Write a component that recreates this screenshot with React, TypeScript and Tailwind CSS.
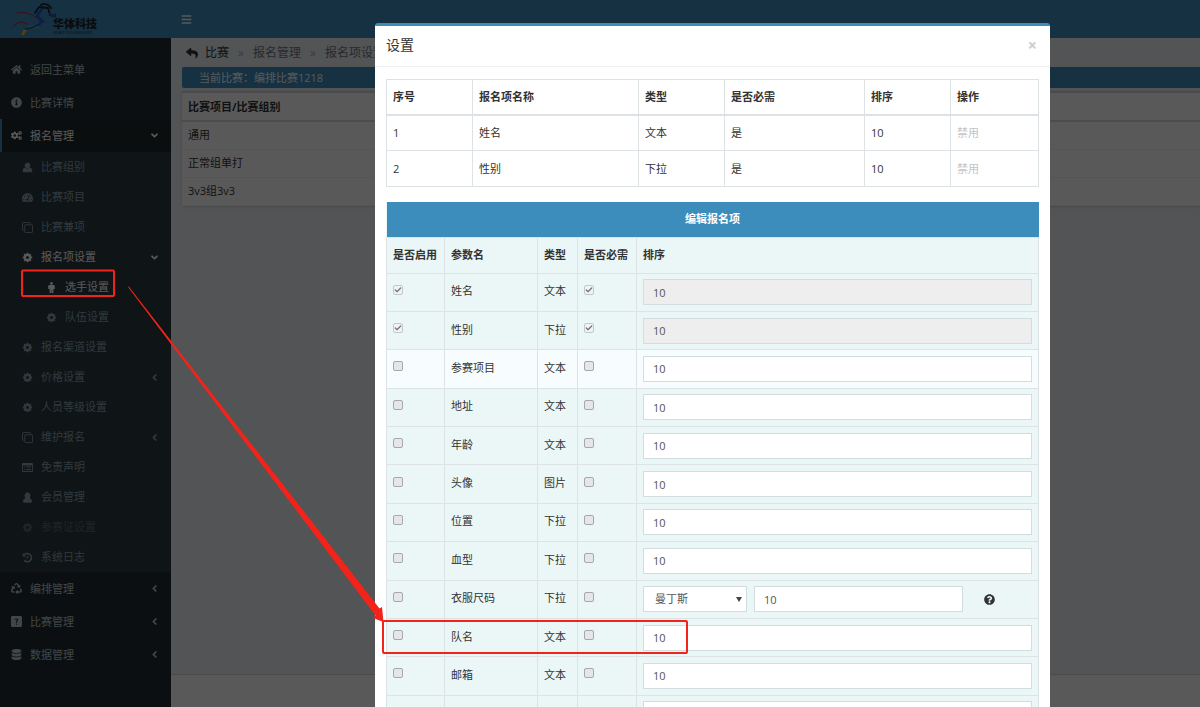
import type { ReactNode } from "react";
import type { IconType } from "react-icons";
import {
  FaAngleDown,
  FaAngleLeft,
  FaBars,
  FaCogs,
  FaDatabase,
  FaHome,
  FaInfoCircle,
  FaQuestionCircle,
  FaRecycle,
  FaReply,
  FaTachometerAlt,
} from "react-icons/fa";
import { Check } from "lucide-react";

type IconProps = { className?: string };

type MenuItem = {
  label: string;
  icon: IconType | ((props: IconProps) => ReactNode);
  arrow?: "left" | "down";
  tone?: "active" | "muted";
  nested?: boolean;
};

function CogIcon({ className }: IconProps) {
  return (
    <svg viewBox="-128 0 1792 1792" className={className} width="1em" height="1em" fill="currentColor">
      <path d="M1024 896q0-106-75-181t-181-75-181 75-75 181 75 181 181 75 181-75 75-181zm512-109v222q0 12-8 23t-20 13l-185 28q-19 54-39 91 35 50 107 138 10 12 10 25t-9 23q-27 37-99 108t-94 71q-12 0-26-9l-138-108q-44 23-91 38-16 136-29 186-7 28-36 28h-222q-14 0-24.500-8.500t-11.500-21.500l-28-184q-49-16-90-37l-141 107q-10 9-25 9-14 0-25-11-126-114-165-168-7-10-7-23 0-12 8-23 15-21 51-66.500t54-70.500q-27-50-41-99l-183-27q-13-2-21-12.500t-8-23.500v-222q0-12 8-23t19-13l186-28q14-46 39-92-40-57-107-138-10-12-10-24 0-10 9-23 26-36 98.500-107.500t94.500-71.500q13 0 26 10l138 107q44-23 91-38 16-136 29-186 7-28 36-28h222q14 0 24.500 8.500t11.500 21.500l28 184q49 16 90 37l142-107q9-9 24-9 13 0 25 10 129 119 165 170 7 8 7 22 0 12-8 23-15 21-51 66.500t-54 70.500q26 50 41 98l183 28q13 2 21 12.500t8 23.500z" />
    </svg>
  );
}

function UserIcon({ className }: IconProps) {
  return (
    <svg viewBox="0 0 16 16" className={className} width="1em" height="1em" fill="currentColor">
      <circle cx="8" cy="5" r="4" />
      <path d="M4.500 8C6.500 9.800 9.500 9.800 11.500 8 14 8.500 15 11 15 13c0 1.500-1 2-2 2H3c-1 0-2-.5-2-2 0-2 1-4.500 3.500-5z" />
    </svg>
  );
}

function MemberIcon({ className }: IconProps) {
  return (
    <svg viewBox="0 0 16 16" className={className} width="1em" height="1em" fill="currentColor">
      <path d="M5 1.500C6 .5 10 .5 11 1.500l.8 3 1.200.7-1 .8c0 1.200-.3 2.200-1 3 2.500.5 3.500 2.500 3.500 4.500 0 1.500-.8 2-2 2h-9c-1.200 0-2-.5-2-2 0-2 1-4 3.500-4.500-.7-.8-1-1.800-1-3l-1-.8 1.200-.7z" />
    </svg>
  );
}

function MaleIcon({ className }: IconProps) {
  return (
    <svg viewBox="0 0 16 16" className={className} width="1em" height="1em" fill="currentColor">
      <circle cx="8" cy="2" r="2" />
      <path d="M5 4.500h6c1 0 1.800.8 1.800 1.800V10h-2v6H8.300v-4h-.6v4H5.200v-6h-2V6.300c0-1 .8-1.800 1.800-1.800z" />
    </svg>
  );
}

function CloneIcon({ className }: IconProps) {
  return (
    <svg viewBox="0 0 16 16" className={className} width="1em" height="1em" fill="none" stroke="currentColor" strokeWidth="1.300">
      <rect x="4" y="4" width="11.300" height="11.300" rx="1" />
      <path d="M3 12H1.700a1 1 0 0 1-1-1V1.700a1 1 0 0 1 1-1H11a1 1 0 0 1 1 1V3" />
    </svg>
  );
}

function ListIcon({ className }: IconProps) {
  return (
    <svg viewBox="0 0 16 16" className={className} width="1em" height="1em" fill="currentColor">
      <path
        fillRule="evenodd"
        d="M1.500 1.500h13A1.500 1.500 0 0 1 16 3v10a1.500 1.500 0 0 1-1.500 1.500h-13A1.500 1.500 0 0 1 0 13V3a1.500 1.500 0 0 1 1.500-1.500zM1.300 5v8h13.400V5zM3 6.500h1.500V8H3zm3 0h7V8H6zM3 10h1.500v1.500H3zm3 0h7v1.500H6z"
      />
    </svg>
  );
}

function HistoryIcon({ className }: IconProps) {
  return (
    <svg viewBox="0 0 16 16" className={className} width="1em" height="1em" fill="none" stroke="currentColor">
      <path d="M3.500 3.800A6 6 0 1 1 3.200 12" strokeWidth="2.200" />
      <path d="M8.300 5v3.800H5.500" strokeWidth="1.300" />
      <path d="M1 1.500v5h5z" fill="currentColor" stroke="none" />
    </svg>
  );
}

function QuestionSquare({ className }: IconProps) {
  return (
    <svg viewBox="0 0 16 16" className={className} width="1em" height="1em">
      <path
        fill="currentColor"
        fillRule="evenodd"
        d="M2 0h12a2 2 0 0 1 2 2v12a2 2 0 0 1-2 2H2a2 2 0 0 1-2-2V2a2 2 0 0 1 2-2zm3.500 4v1.500h3.500L7.200 8v2h1.500V8.500L10.500 6V4zM7.200 11.300v1.500h1.500v-1.500z"
      />
    </svg>
  );
}

const topMenu: MenuItem[] = [
  { label: "返回主菜单", icon: FaHome },
  { label: "比赛详情", icon: FaInfoCircle },
  { label: "报名管理", icon: FaCogs, arrow: "down", tone: "active" },
];

const subMenu: MenuItem[] = [
  { label: "比赛组别", icon: UserIcon },
  { label: "比赛项目", icon: FaTachometerAlt },
  { label: "比赛兼项", icon: CloneIcon },
  { label: "报名项设置", icon: CogIcon, arrow: "down", tone: "active" },
  { label: "选手设置", icon: MaleIcon, tone: "active", nested: true },
  { label: "队伍设置", icon: CogIcon, nested: true },
  { label: "报名渠道设置", icon: CogIcon },
  { label: "价格设置", icon: CogIcon, arrow: "left" },
  { label: "人员等级设置", icon: CogIcon },
  { label: "维护报名", icon: CloneIcon, arrow: "left" },
  { label: "免责声明", icon: ListIcon },
  { label: "会员管理", icon: MemberIcon },
  { label: "参赛证设置", icon: CogIcon, tone: "muted" },
  { label: "系统日志", icon: HistoryIcon },
];

const bottomMenu: MenuItem[] = [
  { label: "编排管理", icon: FaRecycle, arrow: "left" },
  { label: "比赛管理", icon: QuestionSquare, arrow: "left" },
  { label: "数据管理", icon: FaDatabase, arrow: "left" },
];

const enabledFields = [
  { id: 1, name: "姓名", type: "文本" },
  { id: 2, name: "性别", type: "下拉" },
];

const fields = [
  { name: "姓名", type: "文本", locked: true },
  { name: "性别", type: "下拉", locked: true },
  { name: "参赛项目", type: "文本", hover: true },
  { name: "地址", type: "文本" },
  { name: "年龄", type: "文本" },
  { name: "头像", type: "图片" },
  { name: "位置", type: "下拉" },
  { name: "血型", type: "下拉" },
  { name: "衣服尺码", type: "下拉", sized: true },
  { name: "队名", type: "文本" },
  { name: "邮箱", type: "文本" },
  { name: "", type: "" },
];

function Arrow({ dir }: { dir?: "left" | "down" }) {
  if (!dir) return null;
  return dir === "down" ? <FaAngleDown className="ml-auto" /> : <FaAngleLeft className="ml-auto" />;
}

function MainLink({ item }: { item: MenuItem }) {
  const Icon = item.icon;
  const active = item.tone === "active";
  return (
    <li>
      <a
        href="#"
        className={`flex h-[33px] items-center border-l-2 pl-[9px] pr-[11px] ${
          active ? "border-[#3c8dbc] bg-[#1e282c] text-white" : "border-transparent text-[#b8c7ce]"
        }`}
      >
        <Icon className="mr-2 w-[11px]" />
        {item.label}
        <Arrow dir={item.arrow} />
      </a>
    </li>
  );
}

function SubLink({ item }: { item: MenuItem }) {
  const Icon = item.icon;
  const color =
    item.tone === "active" ? "text-white" : item.tone === "muted" ? "text-[#566a73]" : "text-[#8aa4af]";
  return (
    <li>
      <a href="#" className={`flex h-[30px] items-center pr-[11px] ${item.nested ? "pl-[46px]" : "pl-[22px]"} ${color}`}>
        <Icon className="mr-2 w-[11px]" />
        {item.label}
        <Arrow dir={item.arrow} />
      </a>
    </li>
  );
}

function Logo() {
  return (
    <a href="#" className="flex h-[38px] w-[171px] shrink-0 items-end pl-3">
      <svg viewBox="0 0 48 36" className="h-9 w-12" fill="none" strokeLinecap="round" strokeLinejoin="round">
        <path d="M5 11c8-2 14 1 20 5M1 25c4-5 9-6 14-3" stroke="#b0345c" strokeWidth="1.200" />
        <path d="M11 32c1-4 6-7 14-8" stroke="#e8b820" strokeWidth="3" />
        <path d="M14 27c6-1 10-3 14-5 3-3-1-6-3-8l5-7" stroke="#2456c8" strokeWidth="2.500" />
        <path d="M23 11l4-6 9 1 2 7 5 1" stroke="#1c2430" strokeWidth="1.800" />
        <path d="M29 3c3-2 7-1 10 3" stroke="#1c2430" strokeWidth="2" />
        <path d="M26 15l6 5M38 12l3 3 2-3" stroke="#2456c8" strokeWidth="2" />
      </svg>
      <span className="-ml-[7px] flex flex-col pb-[3px] text-[#222]">
        <span className="text-[11px] font-black leading-3">华体科技</span>
        <span className="text-[4px] leading-[5px]">HUATI TECHNOLOGY</span>
      </span>
    </a>
  );
}

function Tick({ label, checked, disabled }: { label: string; checked?: boolean; disabled?: boolean }) {
  return (
    <label className="relative mb-[5px] block size-[10px]">
      <input
        type="checkbox"
        aria-label={label}
        defaultChecked={checked}
        disabled={disabled}
        className="peer block size-[10px] appearance-none rounded-[2px] border border-[#a5a9a9] bg-[#e6e6e6] disabled:border-[#c3c8c8] disabled:bg-[#f0f3f3]"
      />
      <Check className="pointer-events-none absolute left-px top-px hidden size-2 stroke-[#777] stroke-[4] peer-checked:block" />
    </label>
  );
}

function SortInput({ label, disabled }: { label: string; disabled?: boolean }) {
  return (
    <input
      type="text"
      aria-label={label}
      defaultValue="10"
      disabled={disabled}
      className="block h-[26px] w-full border border-[#d2dde0] bg-white px-[9px] text-[11px] text-[#555] disabled:bg-[#eee]"
    />
  );
}

function Th({ children, className = "" }: { children: ReactNode; className?: string }) {
  return <th className={`border border-[#dde3e4] px-[6px] text-left font-bold ${className}`}>{children}</th>;
}

function Td({ children, className = "" }: { children: ReactNode; className?: string }) {
  return <td className={`border border-[#dde3e4] px-[6px] ${className}`}>{children}</td>;
}

function SettingsDialog() {
  return (
    <div
      role="dialog"
      aria-labelledby="dialog-title"
      className="min-w-0 flex-1 self-start rounded-[3px] border-t-[3px] border-[#3c8dbc] bg-white"
    >
      <header className="flex h-[41px] items-center justify-between border-b border-[#eef0f2] pb-[3px] pl-[11px] pr-[13px]">
        <h4 id="dialog-title" className="text-[14px]">
          设置
        </h4>
        <button type="button" aria-label="关闭" className="text-[16px] font-bold leading-4 text-[#ccc]">
          ×
        </button>
      </header>
      <div className="px-[11px] py-3">
        <table className="mb-[15px] w-full table-fixed border-collapse">
          <thead>
            <tr className="h-[35px] border-b-2 border-[#dde3e4]">
              <Th className="w-[86px]">序号</Th>
              <Th>报名项名称</Th>
              <Th className="w-[86px]">类型</Th>
              <Th className="w-[140px]">是否必需</Th>
              <Th className="w-[86px]">排序</Th>
              <Th className="w-[88px]">操作</Th>
            </tr>
          </thead>
          <tbody>
            {enabledFields.map((f) => (
              <tr key={f.id} className="h-9">
                <Td>{f.id}</Td>
                <Td>{f.name}</Td>
                <Td>{f.type}</Td>
                <Td>是</Td>
                <Td>10</Td>
                <Td>
                  <a href="#" className="text-[#c4c4c4]">
                    禁用
                  </a>
                </Td>
              </tr>
            ))}
          </tbody>
        </table>

        <table className="h-[532px] w-full table-fixed border-collapse bg-[#ebf7f7]">
          <colgroup>
            <col className="w-[58px]" />
            <col className="w-[93px]" />
            <col className="w-[40px]" />
            <col className="w-[59px]" />
            <col />
          </colgroup>
          <thead>
            <tr className="h-[35px] bg-[#3c8dbc] text-white">
              <th colSpan={5} className="text-center font-bold">
                编辑报名项
              </th>
            </tr>
            <tr className="h-9">
              <Th>是否启用</Th>
              <Th>参数名</Th>
              <Th>类型</Th>
              <Th>是否必需</Th>
              <Th>排序</Th>
            </tr>
          </thead>
          <tbody>
            {fields.map((f) => (
              <tr key={f.name} className={f.hover ? "bg-[#f7fdff]" : ""}>
                <Td>
                  <Tick label={`启用${f.name}`} checked={f.locked} disabled={f.locked} />
                </Td>
                <Td className="pb-0.5">{f.name}</Td>
                <Td className="pb-0.5">{f.type}</Td>
                <Td>
                  <Tick label={`${f.name}必需`} checked={f.locked} disabled={f.locked} />
                </Td>
                <Td>
                  {f.sized ? (
                    <div className="flex items-center gap-[7px]">
                      <div className="relative w-[104px]">
                        <select
                          aria-label="尺码"
                          className="block h-[26px] w-full appearance-none border border-[#d2dde0] bg-white pl-[11px] text-[11px] text-[#555]"
                        >
                          <option>曼丁斯</option>
                        </select>
                        <span className="pointer-events-none absolute right-[5px] top-[11px] border-x-[3px] border-t-[5px] border-x-transparent border-t-[#444]" />
                      </div>
                      <div className="w-[209px]">
                        <SortInput label={`${f.name}排序`} />
                      </div>
                      <FaQuestionCircle className="ml-[14px] text-[11px]" />
                    </div>
                  ) : (
                    <SortInput label={`${f.name}排序`} disabled={f.locked} />
                  )}
                </Td>
              </tr>
            ))}
          </tbody>
        </table>
      </div>
    </div>
  );
}

/* Red marks that lead from the menu entry to the matching row */
function Callout() {
  return (
    <svg className="pointer-events-none absolute left-0 top-0 h-[707px] w-[700px]" fill="none">
      <rect x="22" y="270.500" width="92" height="25.500" rx="1" stroke="#f4231a" strokeWidth="2" />
      <rect x="383" y="621" width="304" height="32" rx="1" stroke="#f4231a" strokeWidth="2" />
      <path d="M128 287l.8-.5L379.500 608.500l2.500-1.500 1.500 15-10.500-4 2.500-2.500z" fill="#f4231a" />
    </svg>
  );
}

export default function App() {
  return (
    <div className="relative flex h-screen flex-col overflow-hidden bg-[#ecf0f5] font-['Open_Sans','Noto_Sans_CJK_SC',sans-serif] text-[11px] leading-4 text-[#333]">
      <header className="flex h-[38px] shrink-0 items-center bg-[#3c8dbc]">
        <Logo />
        <button type="button" aria-label="菜单" className="ml-[10px] text-white">
          <FaBars />
        </button>
      </header>

      <div className="flex min-h-0 flex-1">
        <nav className="w-[171px] shrink-0 bg-[#222d32] pt-[15px]">
          <ul>
            {topMenu.map((item) => (
              <MainLink key={item.label} item={item} />
            ))}
          </ul>
          <ul className="bg-[#2c3b41]">
            {subMenu.map((item) => (
              <SubLink key={item.label} item={item} />
            ))}
          </ul>
          <ul>
            {bottomMenu.map((item) => (
              <MainLink key={item.label} item={item} />
            ))}
          </ul>
        </nav>

        <div className="flex min-w-0 flex-1 flex-col">
          <main className="flex-1 pl-[11px]">
            <div className="flex h-[29px] items-center pl-1 text-[12px] text-[#777]">
              <FaReply className="mr-[7px] text-[#333]" />
              <a href="#" className="text-[#333]">
                比赛
              </a>
              <span className="w-6 text-center text-[#aaa]">»</span>
              <a href="#">报名管理</a>
              <span className="w-6 text-center text-[#aaa]">»</span>
              <a href="#">报名项设置</a>
            </div>
            <div className="mb-[3px] flex h-[21px] items-center rounded-l-[2px] bg-[#3c8dbc] pl-[17px] text-white">
              当前比赛：编排比赛1218
            </div>
            <table className="w-full border-collapse border-t-2 border-[#d2d6de] bg-white shadow-sm">
              <thead>
                <tr className="h-[29px] border-b-2 border-[#dcdcdc]">
                  <th className="px-[6px] text-left font-bold">比赛项目/比赛组别</th>
                </tr>
              </thead>
              <tbody>
                {["通用", "正常组单打", "3v3组3v3"].map((name) => (
                  <tr key={name} className="h-7 border-b border-[#f4f4f4]">
                    <td className="px-[6px]">{name}</td>
                  </tr>
                ))}
              </tbody>
            </table>
          </main>
          <footer className="h-[33px] shrink-0 border-t border-[#d2d6de] bg-white" />
        </div>
      </div>

      <div className="absolute inset-0 flex overflow-hidden bg-black/65 pl-[375px] pr-[150px] pt-[23px]">
        <SettingsDialog />
      </div>
      <Callout />
    </div>
  );
}
